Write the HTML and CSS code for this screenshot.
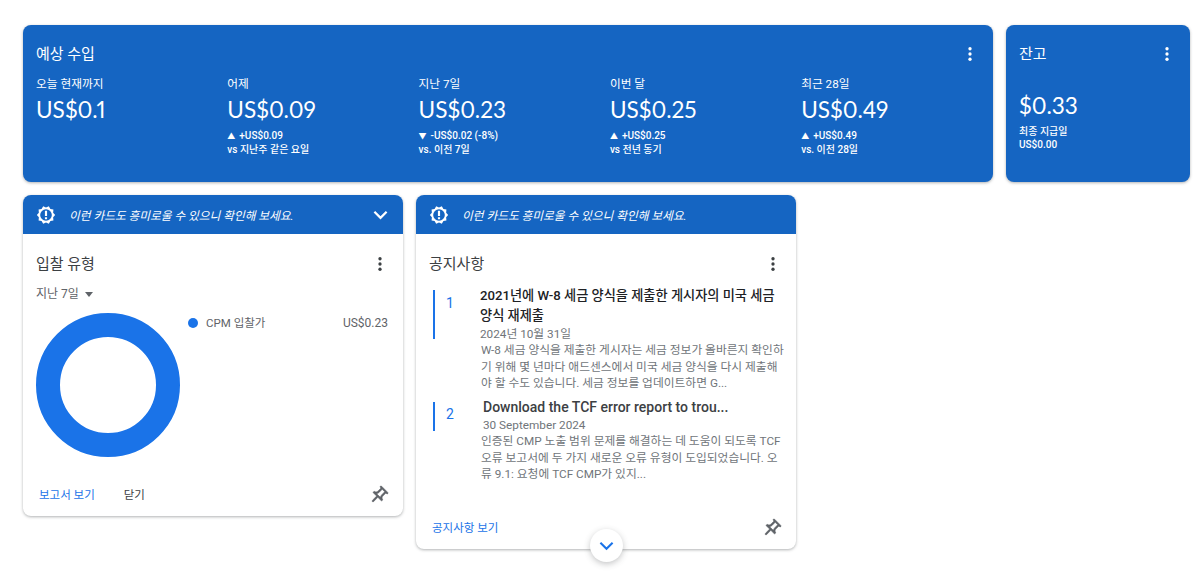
FILE: index.html
```html
<!DOCTYPE html>
<html lang="ko">
<head>
<meta charset="utf-8">
<title>AdSense</title>
<link rel="stylesheet" href="styles.css">
</head>
<body>
<main class="page">
  <div class="row top">
    <section class="card blue earnings">
      <div class="card-head">
        <h2>예상 수입</h2>
        <svg class="more" viewBox="0 0 4 16"><circle cx="2" cy="2" r="1.9"/><circle cx="2" cy="8" r="1.9"/><circle cx="2" cy="14" r="1.9"/></svg>
      </div>
      <div class="metrics">
        <div class="metric"><div class="m-label">오늘 현재까지</div><div class="m-value">US$0.1</div></div>
        <div class="metric"><div class="m-label">어제</div><div class="m-value">US$0.09</div><div class="m-note"><span class="tri">▲</span>+US$0.09<br>vs 지난주 같은 요일</div></div>
        <div class="metric"><div class="m-label">지난 7일</div><div class="m-value">US$0.23</div><div class="m-note"><span class="tri">▼</span>-US$0.02 (-8%)<br>vs. 이전 7일</div></div>
        <div class="metric"><div class="m-label">이번 달</div><div class="m-value">US$0.25</div><div class="m-note"><span class="tri">▲</span>+US$0.25<br>vs 전년 동기</div></div>
        <div class="metric"><div class="m-label">최근 28일</div><div class="m-value">US$0.49</div><div class="m-note"><span class="tri">▲</span>+US$0.49<br>vs. 이전 28일</div></div>
      </div>
    </section>
    <section class="card blue balance">
      <div class="card-head">
        <h2>잔고</h2>
        <svg class="more" viewBox="0 0 4 16"><circle cx="2" cy="2" r="1.9"/><circle cx="2" cy="8" r="1.9"/><circle cx="2" cy="14" r="1.9"/></svg>
      </div>
      <div class="b-value">$0.33</div>
      <div class="m-note">최종 지급일<br>US$0.00</div>
    </section>
  </div>
  <div class="row bottom">
    <section class="card white bids">
      <div class="banner">
        <svg class="alert" viewBox="0 0 24 24"><path d="M23 12l-2.44-2.79.34-3.69-3.61-.82-1.89-3.2L12 2.96 8.6 1.5 6.71 4.69 3.1 5.5l.34 3.7L1 12l2.44 2.79-.34 3.7 3.61.82L8.6 22.5l3.4-1.47 3.4 1.46 1.89-3.19 3.61-.82-.34-3.69L23 12zM12 19a7 7 0 1 1 0-14 7 7 0 0 1 0 14zm-1.3-4.2h2.6v2.4h-2.6zm0-8h2.6v6.4h-2.6z" fill-rule="evenodd"/></svg>
        <span>이런 카드도 흥미로울 수 있으니 확인해 보세요.</span>
        <svg class="chev" viewBox="0 0 16 10"><path d="M1.5 1.5 8 8l6.5-6.5"/></svg>
      </div>
      <div class="card-body">
        <div class="card-head dark">
          <h2>입찰 유형</h2>
          <svg class="more" viewBox="0 0 4 16"><circle cx="2" cy="2" r="1.9"/><circle cx="2" cy="8" r="1.9"/><circle cx="2" cy="14" r="1.9"/></svg>
        </div>
        <div class="range">지난 7일 <i class="caret"></i></div>
        <div class="chart-row">
          <svg class="donut" viewBox="0 0 144 144"><circle cx="72" cy="72" r="60" /></svg>
          <div class="legend">
            <i class="dot"></i><span class="l-name">CPM 입찰가</span><span class="l-val">US$0.23</span>
          </div>
        </div>
        <div class="card-foot">
          <a class="link">보고서 보기</a>
          <a class="close">닫기</a>
          <svg class="pin" viewBox="0 0 24 24"><path d="M14 4v5c0 1.12.37 2.16 1 3H9c.65-.86 1-1.9 1-3V4h4m3-2H7c-.55 0-1 .45-1 1s.45 1 1 1h1v5c0 1.66-1.34 3-3 3v2h5.97v7l1 1 1-1v-7H19v-2c-1.66 0-3-1.34-3-3V4h1c.55 0 1-.45 1-1s-.45-1-1-1z"/></svg>
        </div>
      </div>
    </section>
    <div class="notice-wrap">
      <section class="card white notices">
        <div class="banner">
          <svg class="alert" viewBox="0 0 24 24"><path d="M23 12l-2.44-2.79.34-3.69-3.61-.82-1.89-3.2L12 2.96 8.6 1.5 6.71 4.69 3.1 5.5l.34 3.7L1 12l2.44 2.79-.34 3.7 3.61.82L8.6 22.5l3.4-1.47 3.4 1.46 1.89-3.19 3.61-.82-.34-3.69L23 12zM12 19a7 7 0 1 1 0-14 7 7 0 0 1 0 14zm-1.3-4.2h2.6v2.4h-2.6zm0-8h2.6v6.4h-2.6z" fill-rule="evenodd"/></svg>
          <span>이런 카드도 흥미로울 수 있으니 확인해 보세요.</span>
        </div>
        <div class="card-body">
          <div class="card-head dark">
            <h2>공지사항</h2>
            <svg class="more" viewBox="0 0 4 16"><circle cx="2" cy="2" r="1.9"/><circle cx="2" cy="8" r="1.9"/><circle cx="2" cy="14" r="1.9"/></svg>
          </div>
          <article class="notice first">
            <div class="num n1">1</div>
            <div class="n-text">
              <h3>2021년에 W-8 세금 양식을 제출한 게시자의 미국 세금 양식 재제출</h3>
              <div class="n-date">2024년 10월 31일</div>
              <p>W-8 세금 양식을 제출한 게시자는 세금 정보가 올바른지 확인하기 위해 몇 년마다 애드센스에서 미국 세금 양식을 다시 제출해야 할 수도 있습니다. 세금 정보를 업데이트하면 G...</p>
            </div>
          </article>
          <article class="notice second">
            <div class="num n2">2</div>
            <div class="n-text">
              <h3>Download the TCF error report to trou...</h3>
              <div class="n-date">30 September 2024</div>
              <p>인증된 CMP 노출 범위 문제를 해결하는 데 도움이 되도록 TCF 오류 보고서에 두 가지 새로운 오류 유형이 도입되었습니다. 오류 9.1: 요청에 TCF CMP가 있지...</p>
            </div>
          </article>
          <div class="card-foot n-foot">
            <a class="link">공지사항 보기</a>
            <svg class="pin" viewBox="0 0 24 24"><path d="M14 4v5c0 1.12.37 2.16 1 3H9c.65-.86 1-1.9 1-3V4h4m3-2H7c-.55 0-1 .45-1 1s.45 1 1 1h1v5c0 1.66-1.34 3-3 3v2h5.97v7l1 1 1-1v-7H19v-2c-1.66 0-3-1.34-3-3V4h1c.55 0 1-.45 1-1s-.45-1-1-1z"/></svg>
          </div>
        </div>
      </section>
      <button class="expand" aria-label="expand"><svg viewBox="0 0 16 10"><path d="M1.5 1.5 8 8l6.5-6.5"/></svg></button>
    </div>
  </div>
</main>
</body>
</html>
```
FILE: styles.css
```css
* { box-sizing: border-box; }
html, body { margin: 0; height: 585px; overflow: hidden; background: #fff; }
body { font-family: Roboto, "Noto Sans CJK KR", sans-serif; color: #3c4043; }
.page { padding: 25px 10px 0 23px; }
.row { display: flex; gap: 13px; align-items: flex-start; }
.top { margin-bottom: 13px; }
.card { border-radius: 8px; box-shadow: 0 1px 3px rgba(60,64,67,.4); }
.blue { background: #1565c2; color: #fff; height: 157px; }
h2 { margin: 0; font-weight: 400; font-size: 15px; line-height: 20px; }
.card-head { display: flex; justify-content: space-between; align-items: center; }
.more { width: 4px; height: 14px; fill: #fff; }
.earnings { width: 970px; padding: 19px 21px 0 13px; }
.metrics { display: flex; margin-top: 12px; }
.metric { flex: none; width: 191.3px; }
.m-label { font-size: 11.7px; line-height: 16px; }
.m-value { font-family: Lato, Roboto, sans-serif; font-feature-settings: "pnum"; font-size: 22.6px; line-height: 30px; margin-top: 3px; }
.m-note { font-size: 10px; line-height: 13px; font-weight: 500; margin-top: 4px; }
.tri { font-size: 8px; display: inline-block; width: 12px; }
.balance { width: 184px; padding: 19px 21px 0 13px; }
.b-value { font-family: Lato, Roboto, sans-serif; font-feature-settings: "pnum"; font-size: 22.6px; line-height: 30px; margin-top: 27px; }
.balance .m-note { margin-top: 4px; }
.white { background: #fff; width: 380px; overflow: hidden; }
.banner { height: 39px; background: #1565c2; color: #fff; display: flex; align-items: center; padding: 0 15px 0 13px; font-size: 11.7px; font-style: italic; }
.alert { width: 20px; height: 20px; fill: #fff; margin-right: 13px; flex: none; }
.banner span { flex: 1; }
.chev { width: 15px; height: 10px; fill: none; stroke: #fff; stroke-width: 2.4; }
.card-body { padding: 0 13px; position: relative; }
.card-head.dark { padding-top: 20px; }
.card-head.dark h2 { color: #3c4043; font-size: 15px; }
.dark .more { fill: #3c4043; margin-right: 8px; }
.bids { height: 321px; }
.range { font-size: 12px; line-height: 16px; margin-top: 12px; display: flex; align-items: center; gap: 5px; color: #5f6368; }
.caret { width: 0; height: 0; border: 4.5px solid transparent; border-top: 5px solid #5f6368; border-bottom: 0; margin-left: 1px; }
.chart-row { display: flex; align-items: flex-start; margin-top: 11px; }
.donut { width: 144px; height: 144px; flex: none; }
.donut circle { fill: none; stroke: #1a73e8; stroke-width: 24; }
.legend { flex: 1; display: flex; align-items: center; margin: 2px 0 0 8px; padding-right: 2px; color: #5f6368; line-height: 16px; }
.dot { width: 10px; height: 10px; border-radius: 50%; background: #1a73e8; margin-right: 8px; }
.l-name { flex: 1; font-size: 11.5px; }
.l-val { font-size: 12px; }
.card-foot { display: flex; align-items: center; margin-top: 24px; font-size: 11.5px; }
.link { color: #1a73e8; padding-left: 3px; }
.close { margin-left: 29px; color: #3c4043; }
.pin { width: 21px; height: 21px; margin: 4px 1px 0 auto; transform: rotate(45deg); fill: #5f6368; stroke: #5f6368; stroke-width: .6; }
.notice-wrap { position: relative; }
.notices { height: 354px; }
.notice { display: flex; position: relative; }
.first { margin-top: 12px; }
.second { margin-top: 6.5px; }
.num { flex: none; border-left: 2px solid #1a73e8; padding-left: 11px; color: #1a73e8; font-size: 14px; margin-left: 4px; line-height: 16px; }
.n1 { height: 49px; margin-top: 4px; padding-top: 5px; width: 47px; }
.n2 { height: 29.5px; margin-top: 3.5px; padding-top: 4.5px; width: 50px; }
.n-text { flex: 1; min-width: 0; margin-right: -1px; }
h3 { margin: 0; font-size: 13.2px; font-weight: 500; line-height: 19.5px; color: #202124; }
.second h3 { font-size: 14px; color: #3c4043; }
.n-date { font-size: 11.75px; line-height: 16px; color: #70757a; margin-top: 1px; }
.second .n-date { margin-top: -1px; }
p { margin: 0 0 0 1px; font-size: 11.75px; line-height: 16.5px; color: #70757a; }
.second p { margin: .5px 0 0 -2px; }
.n-foot { margin-top: 0; position: absolute; left: 13px; right: 13px; top: 280px; }
.expand { position: absolute; left: 174px; top: 334px; width: 33px; height: 33px; border-radius: 50%; border: 0; padding: 0; background: #fff; box-shadow: 0 2px 6px rgba(60,64,67,.3); display: flex; align-items: center; justify-content: center; }
.expand svg { width: 15px; height: 10px; fill: none; stroke: #1a73e8; stroke-width: 2.2; }
```
